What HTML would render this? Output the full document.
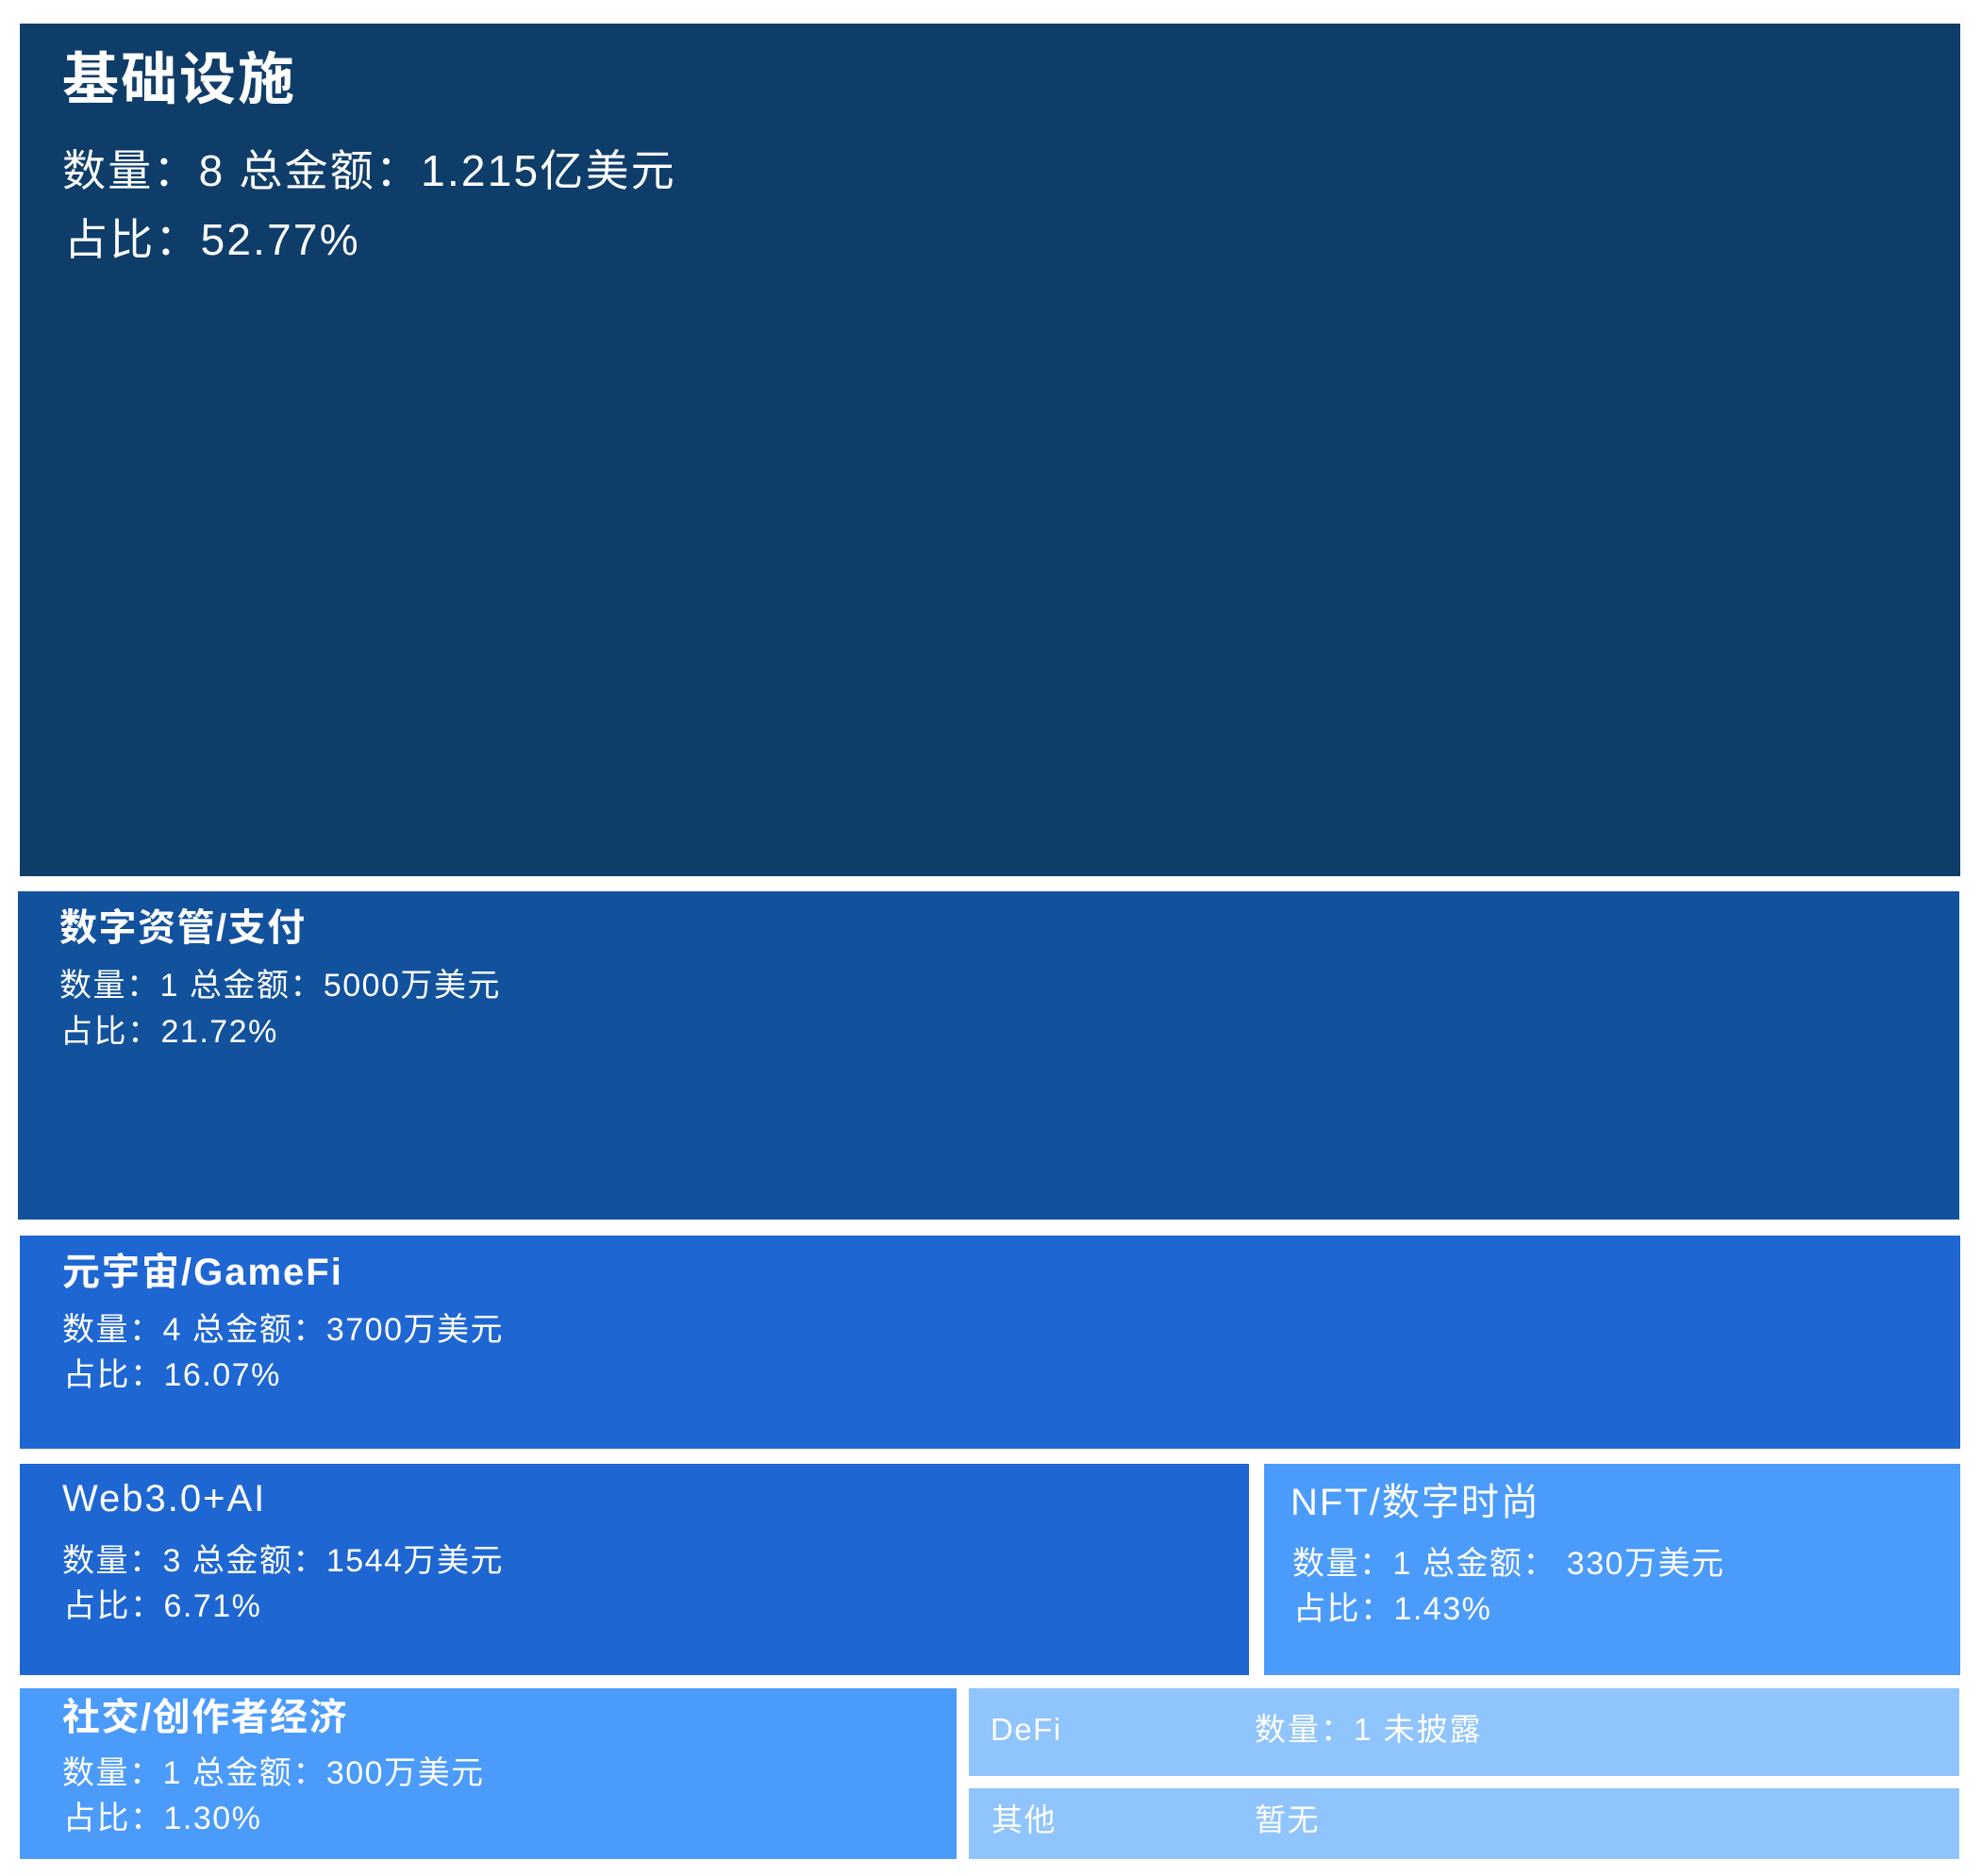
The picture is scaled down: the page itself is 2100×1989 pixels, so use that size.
<!DOCTYPE html>
<html><head><meta charset="utf-8"><style>
html,body{margin:0;padding:0;background:#fff;}
body{width:2100px;height:1989px;position:relative;overflow:hidden;font-family:"Liberation Sans","Noto Sans CJK SC",sans-serif;color:#fff;}
.b{position:absolute;}
.t{position:absolute;white-space:nowrap;line-height:1;letter-spacing:1.5px;}
.h{font-weight:bold;}
</style></head><body>
<div class="b" style="left:21px;top:25px;width:2057px;height:904px;background:#0f3d69"></div>
<div class="b" style="left:19px;top:945px;width:2058px;height:348px;background:#12529d"></div>
<div class="b" style="left:21px;top:1310px;width:2057px;height:226px;background:#1e66d2"></div>
<div class="b" style="left:21px;top:1552px;width:1303px;height:224px;background:#1e66d2"></div>
<div class="b" style="left:1340px;top:1552px;width:738px;height:224px;background:#4b9bfa"></div>
<div class="b" style="left:21px;top:1790px;width:993px;height:181px;background:#4b9bfa"></div>
<div class="b" style="left:1027px;top:1790px;width:1050px;height:93px;background:#8fc4fc"></div>
<div class="b" style="left:1027px;top:1896px;width:1050px;height:75px;background:#8fc4fc"></div>

<div class="t h" style="left:66px;top:55px;font-size:60px;letter-spacing:2px">基础设施</div>
<div class="t" style="left:66px;top:158px;font-size:46px;letter-spacing:2.2px">数量：8 总金额：1.215亿美元</div>
<div class="t" style="left:68px;top:231px;font-size:46px;letter-spacing:2.2px">占比：52.77%</div>

<div class="t h" style="left:63px;top:964px;font-size:40px">数字资管/支付</div>
<div class="t" style="left:63px;top:1028px;font-size:34px">数量：1 总金额：5000万美元</div>
<div class="t" style="left:64px;top:1077px;font-size:34px">占比：21.72%</div>

<div class="t h" style="left:66px;top:1329px;font-size:40px;letter-spacing:2px">元宇宙/GameFi</div>
<div class="t" style="left:66px;top:1393px;font-size:34px">数量：4 总金额：3700万美元</div>
<div class="t" style="left:67px;top:1441px;font-size:34px">占比：16.07%</div>

<div class="t" style="left:66px;top:1569px;font-size:40px;letter-spacing:2px">Web3.0+AI</div>
<div class="t" style="left:66px;top:1638px;font-size:34px">数量：3 总金额：1544万美元</div>
<div class="t" style="left:67px;top:1686px;font-size:34px">占比：6.71%</div>

<div class="t" style="left:1368px;top:1573px;font-size:40px;letter-spacing:2px">NFT/数字时尚</div>
<div class="t" style="left:1370px;top:1641px;font-size:34px">数量：1 总金额：&nbsp;330万美元</div>
<div class="t" style="left:1371px;top:1689px;font-size:34px">占比：1.43%</div>

<div class="t h" style="left:66px;top:1801px;font-size:40px">社交/创作者经济</div>
<div class="t" style="left:66px;top:1863px;font-size:34px">数量：1 总金额：300万美元</div>
<div class="t" style="left:67px;top:1911px;font-size:34px">占比：1.30%</div>

<div class="t" style="left:1050px;top:1817px;font-size:33px">DeFi</div>
<div class="t" style="left:1330px;top:1817px;font-size:33px;letter-spacing:2px">数量：1 未披露</div>
<div class="t" style="left:1051px;top:1913px;font-size:33px">其他</div>
<div class="t" style="left:1330px;top:1913px;font-size:33px">暂无</div>
</body></html>
